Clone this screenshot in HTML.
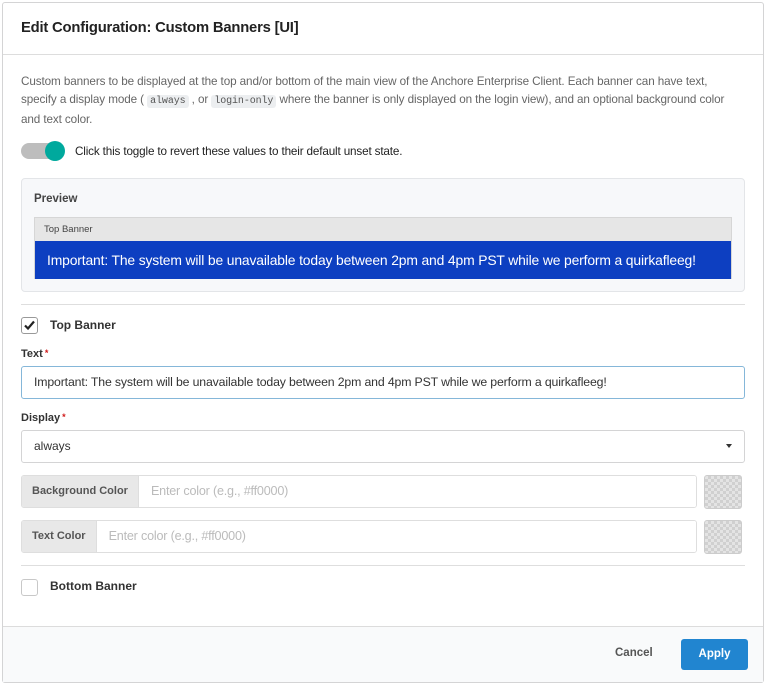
<!DOCTYPE html>
<html><head><style>
*{box-sizing:border-box;margin:0;padding:0}
body{width:766px;height:685px;background:#fff;font-family:"Liberation Sans",sans-serif;color:#333;position:relative;overflow:hidden}
.modal{position:absolute;left:2px;top:2px;width:762px;height:681px;border:1px solid #d4d4d5;border-radius:3px;background:#fff}
.hdr{position:absolute;left:0;top:0;right:0;height:52px;border-bottom:1px solid #ddd;padding:17px 0 0 18px;font-size:14.8px;font-weight:bold;color:#222;letter-spacing:-.2px}
.abs{position:absolute}
.desc{left:21px;top:73px;width:712px;font-size:11.7px;line-height:18px;color:#666;letter-spacing:-.1px}
code{font-family:"Liberation Mono",monospace;font-size:10px;background:#eceef0;padding:1px 3px;border-radius:3px;color:#555}
.tog{left:21px;top:141px;width:44px;height:20px}
.tog .tr{position:absolute;left:0;top:2px;width:40px;height:16px;border-radius:8px;background:#bdbdbd}
.tog .kn{position:absolute;left:24px;top:0;width:20px;height:20px;border-radius:50%;background:#00a99d}
.togt{left:75px;top:145px;font-size:11.7px;color:#222;letter-spacing:-.15px}
.prev{left:21px;top:178px;width:724px;height:114px;background:#f7f8fa;border:1px solid #e3e5e8;border-radius:4px}
.prev .t{position:absolute;left:12px;top:14px;font-size:11.5px;font-weight:bold;color:#444}
.bn{position:absolute;left:12px;top:38px;width:698px;height:62px;border:1px solid #d6d6d6}
.bn .h{height:23px;background:#e6e6e6;font-size:9.5px;color:#444;padding:6px 0 0 9px}
.bn .b{height:38px;background:#0d3fc1;color:#fff;font-size:13.9px;padding:11px 0 0 12px;letter-spacing:-.15px}
.hr{left:19px;width:724px;height:1px;background:#dedede}
.cb{width:17px;height:17px;border:1px solid #c8c8c8;border-radius:3px;background:#fff}
.lbl{font-size:12px;font-weight:bold;color:#333}
.star{color:#d01919;font-size:9px;vertical-align:top;margin-left:2px}
.inp{border:1px solid #d4d4d5;border-radius:3px;background:#fff;font-size:11.5px}
.grp{height:33px;border:1px solid #dedede;border-radius:3px;display:flex;overflow:hidden}
.grp .a{background:#e8e8e8;font-size:11px;font-weight:bold;color:#555;padding:9px 10px 0 10px}
.grp .p{flex:1;background:#fff;border-left:1px solid #dedede;font-size:12.6px;color:#bbb;padding:8px 12px 0 12px;letter-spacing:-.2px}
.sw{width:38px;height:34px;border:1px solid #ccc;border-radius:3px;background-color:#e4e4e4;background-image:linear-gradient(45deg,#d0d0d0 25%,transparent 25%,transparent 75%,#d0d0d0 75%),linear-gradient(45deg,#d0d0d0 25%,transparent 25%,transparent 75%,#d0d0d0 75%);background-size:6px 6px;background-position:0 0,3px 3px}
.ftr{position:absolute;left:0;right:0;bottom:0;height:56px;background:#f9fafb;border-top:1px solid #dcdcdc}
</style></head><body>
<div class="modal">
<div class="hdr">Edit Configuration: Custom Banners [UI]</div>
</div>
<div class="abs desc">Custom banners to be displayed at the top and/or bottom of the main view of the Anchore Enterprise Client. Each banner can have text, specify a display mode ( <code>always</code> , or <code>login-only</code> where the banner is only displayed on the login view), and an optional background color and text color.</div>
<div class="abs tog"><div class="tr"></div><div class="kn"></div></div>
<div class="abs togt">Click this toggle to revert these values to their default unset state.</div>
<div class="abs prev"><div class="t">Preview</div>
<div class="bn"><div class="h">Top Banner</div><div class="b">Important: The system will be unavailable today between 2pm and 4pm PST while we perform a quirkafleeg!</div></div></div>
<div class="abs hr" style="top:304px;left:21px"></div>
<div class="abs cb" style="left:21px;top:317px;border-color:#999"><svg width="15" height="15" viewBox="0 0 15 15"><path d="M3 7.5l3 3 6-7" stroke="#222" stroke-width="2.2" fill="none"/></svg></div>
<div class="abs lbl" style="left:50px;top:318px">Top Banner</div>
<div class="abs lbl" style="left:21px;top:348px;font-size:11px">Text<span class="star">*</span></div>
<div class="abs inp" style="left:21px;top:366px;width:724px;height:33px;border-color:#85b7d9;padding:8px 0 0 12px;color:#333;font-size:12.3px;letter-spacing:-.15px">Important: The system will be unavailable today between 2pm and 4pm PST while we perform a quirkafleeg!</div>
<div class="abs lbl" style="left:21px;top:412px;font-size:11px">Display<span class="star">*</span></div>
<div class="abs inp" style="left:21px;top:430px;width:724px;height:33px;padding:8px 0 0 12px;font-size:12px">always</div>
<div class="abs" style="left:726px;top:444px;width:0;height:0;border-left:3.5px solid transparent;border-right:3.5px solid transparent;border-top:4px solid #333"></div>
<div class="abs grp" style="left:21px;top:475px;width:676px"><div class="a">Background Color</div><div class="p">Enter color (e.g., #ff0000)</div></div>
<div class="abs sw" style="left:704px;top:475px"></div>
<div class="abs grp" style="left:21px;top:520px;width:676px"><div class="a">Text Color</div><div class="p">Enter color (e.g., #ff0000)</div></div>
<div class="abs sw" style="left:704px;top:520px"></div>
<div class="abs hr" style="top:565px;left:21px"></div>
<div class="abs cb" style="left:21px;top:579px"></div>
<div class="abs lbl" style="left:50px;top:579px">Bottom Banner</div>
<div class="ftr" style="left:3px;right:3px;bottom:3px"></div>
<div class="abs" style="left:615px;top:647px;font-size:11.5px;font-weight:bold;color:#555">Cancel</div>
<div class="abs" style="left:681px;top:639px;width:67px;height:31px;background:#2185d0;border-radius:3px;color:#fff;font-size:11.5px;font-weight:bold;text-align:center;padding-top:9px">Apply</div>
</body></html>
